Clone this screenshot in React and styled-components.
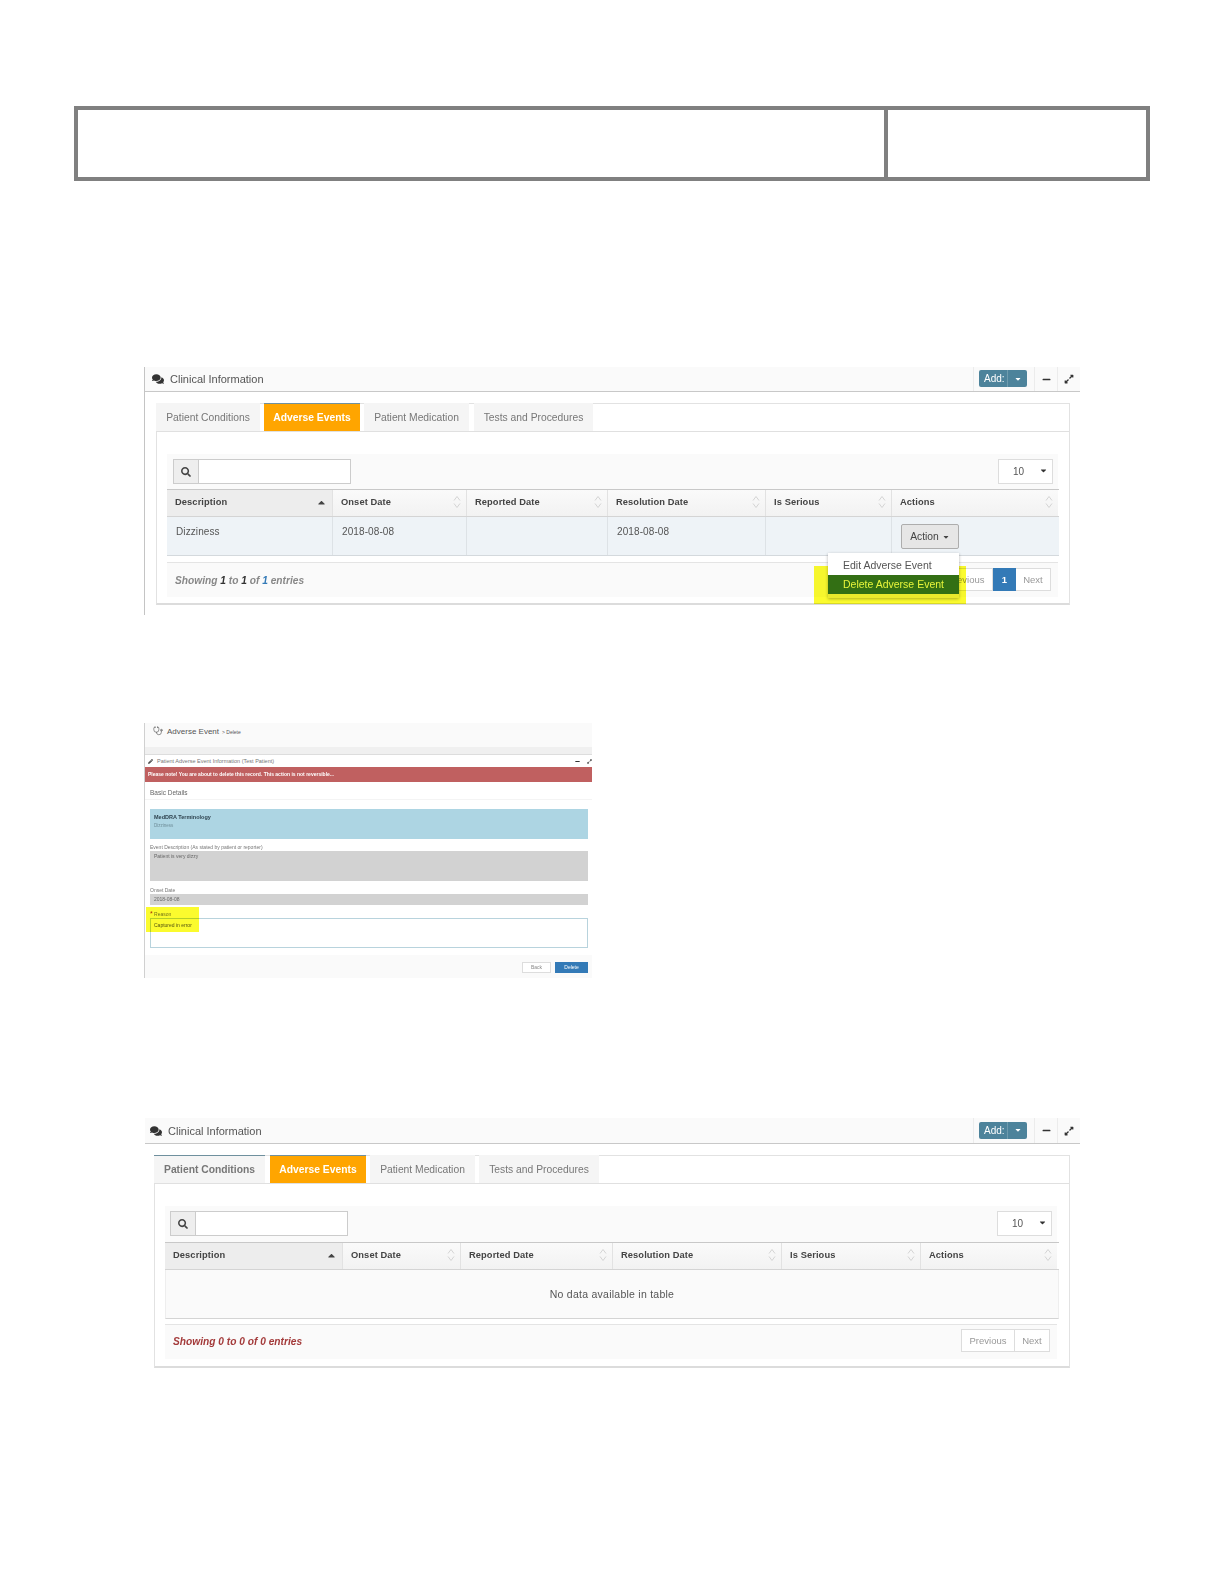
import React from "react";
import styled, { createGlobalStyle } from "styled-components";
import {
  FaComments,
  FaSearch,
  FaMinus,
  FaExpandAlt,
  FaPencilAlt,
  FaCaretUp,
  FaCaretDown,
} from "react-icons/fa";
import { Stethoscope } from "lucide-react";

const HEADINGS = [
  "Description",
  "Onset Date",
  "Reported Date",
  "Resolution Date",
  "Is Serious",
  "Actions",
];

const TAB_NAMES = [
  "Patient Conditions",
  "Adverse Events",
  "Patient Medication",
  "Tests and Procedures",
];

function SortIcon() {
  return (
    <SortSvg viewBox="0 0 8 14">
      <path d="M1 5.5 4 1.5l3 4M1 8.5l3 4 3-4" />
    </SortSvg>
  );
}

function ClinicalPanel({ first, tabWidths, tabGaps, cols, accentTab, children, footer }) {
  return (
    <Section $framed={first}>
      <PanelHeader $height={first ? 25 : 26} $left={first ? 7 : 5}>
        <FaComments size={12} />
        <HeaderTitle>Clinical Information</HeaderTitle>
        <HeaderTools>
          <AddCell>
            <AddButton>
              <AddLabel>Add:</AddLabel>
              <AddCaret>
                <FaCaretDown size={8} />
              </AddCaret>
            </AddButton>
          </AddCell>
          <ToolCell>
            <FaMinus size={9} />
          </ToolCell>
          <ToolCell>
            <FaExpandAlt size={10} />
          </ToolCell>
        </HeaderTools>
      </PanelHeader>
      <TabBox $left={first ? 11 : 9} $width={first ? 914 : 916} $bottom={first ? 6 : 7}>
        <TabBar>
          {TAB_NAMES.map((name, i) => (
            <Tab
              key={name}
              $width={tabWidths[i]}
              $gap={tabGaps[i]}
              $active={i === 1}
              $accent={accentTab && i === 0}
            >
              {name}
            </Tab>
          ))}
        </TabBar>
        <TabContent>
          <Toolbar $height={first ? 35 : 36} $width={first ? 891 : 892} $left={first ? 6 : 5}>
            <SearchGroup>
              <SearchAddon>
                <FaSearch size={10} />
              </SearchAddon>
              <SearchInput type="text" />
            </SearchGroup>
            <LengthSelect>
              10
              <FaCaretDown size={9} />
            </LengthSelect>
          </Toolbar>
          <HeadRow $cols={cols}>
            {HEADINGS.map((h, i) => (
              <HeadCell key={h} $sorted={i === 0}>
                {h}
                {i === 0 ? <FaCaretUp size={11} /> : <SortIcon />}
              </HeadCell>
            ))}
          </HeadRow>
          {children}
          <TableFooter $gap={first ? 6 : 5} $width={first ? 891 : 892} $top={first ? 5 : 4}>
            {footer}
          </TableFooter>
        </TabContent>
      </TabBox>
    </Section>
  );
}

function DeleteForm() {
  return (
    <FormSection>
      <PageHead>
        <Stethoscope size={10} strokeWidth={1.5} />
        <PageTitle>Adverse Event</PageTitle>
        <PageCrumb>&gt; Delete</PageCrumb>
      </PageHead>
      <Band />
      <SubHead>
        <FaPencilAlt size={5} />
        <SubTitle>Patient Adverse Event Information (Test Patient)</SubTitle>
        <SubTools>
          <FaMinus size={5} />
          <FaExpandAlt size={5} />
        </SubTools>
      </SubHead>
      <AlertBar>Please note! You are about to delete this record. This action is not reversible...</AlertBar>
      <FormHeading>Basic Details</FormHeading>
      <FormBody>
        <TermBox>
          <TermTitle>MedDRA Terminology</TermTitle>
          <TermValue>Dizziness</TermValue>
        </TermBox>
        <FieldLabel $height={12}>Event Description (As stated by patient or reporter)</FieldLabel>
        <ReadOnlyBox $height={30}>Patient is very dizzy</ReadOnlyBox>
        <FieldLabel $height={13}>Onset Date</FieldLabel>
        <ReadOnlyBox $height={11}>2018-08-08</ReadOnlyBox>
        <ReasonField>
          <ReasonLabel>
            <Required>*</Required> Reason
          </ReasonLabel>
          <ReasonBox>Captured in error</ReasonBox>
          <FormHighlight />
        </ReasonField>
      </FormBody>
      <FormFooter>
        <BackButton>Back</BackButton>
        <DeleteButton>Delete</DeleteButton>
      </FormFooter>
    </FormSection>
  );
}

function App() {
  return (
    <Page>
      <GlobalStyle />
      <HeaderFrame>
        <FrameCell />
        <FrameCell />
      </HeaderFrame>

      <FirstBlock>
        <ClinicalPanel
          first
          tabWidths={[104, 96, 105, 119]}
          tabGaps={[4, 4, 5, 0]}
          cols="166px 134px 141px 158px 126px 166px"
          footer={
            <>
              <Entries>
                Showing <b>1</b> to <b>1</b> of <Blue>1</Blue> entries
              </Entries>
              <Pager>
                <PageButton $width={54}>Previous</PageButton>
                <PageButton $width={23} $current>
                  1
                </PageButton>
                <PageButton $width={35}>Next</PageButton>
              </Pager>
            </>
          }
        >
          <DataRow $cols="166px 134px 141px 158px 126px 166px">
            <DataCell>Dizziness</DataCell>
            <DataCell>2018-08-08</DataCell>
            <DataCell />
            <DataCell>2018-08-08</DataCell>
            <DataCell />
            <ActionCell>
              <ActionButton>
                Action <FaCaretDown size={8} />
              </ActionButton>
              <MenuHighlight />
              <Menu>
                <MenuItem>Edit Adverse Event</MenuItem>
                <MenuItem $picked>Delete Adverse Event</MenuItem>
              </Menu>
            </ActionCell>
          </DataRow>
        </ClinicalPanel>
      </FirstBlock>

      <SecondBlock>
        <DeleteForm />
      </SecondBlock>

      <ThirdBlock>
        <ClinicalPanel
          accentTab
          tabWidths={[111, 96, 105, 120]}
          tabGaps={[5, 4, 4, 0]}
          cols="178px 118px 152px 169px 139px 136px"
          footer={
            <>
              <Entries $empty>Showing 0 to 0 of 0 entries</Entries>
              <Pager>
                <PageButton $width={54}>Previous</PageButton>
                <PageButton $width={35}>Next</PageButton>
              </Pager>
            </>
          }
        >
          <EmptyRow>No data available in table</EmptyRow>
        </ClinicalPanel>
      </ThirdBlock>
    </Page>
  );
}

/* Styles */
const GlobalStyle = createGlobalStyle`
  html, body {
    margin: 0;
    background: #fff;
  }
  * {
    box-sizing: border-box;
  }
`;

const Page = styled.div`
  min-height: 1584px;
  padding-top: 106px;
  background: #fff;
  color: #555;
  font-family: "Liberation Sans", Arial, sans-serif;
`;

const HeaderFrame = styled.div`
  display: grid;
  grid-template-columns: 810px 258px;
  width: 1076px;
  height: 75px;
  margin-left: 74px;
  border: 4px solid #808080;
`;

const FrameCell = styled.div`
  &:first-child {
    border-right: 4px solid #808080;
  }
`;

const FirstBlock = styled.div`
  margin: 186px 0 0 144px;
`;

const SecondBlock = styled.div`
  margin: 108px 0 0 144px;
`;

const ThirdBlock = styled.div`
  margin: 140px 0 0 144px;
`;

const Section = styled.section`
  width: 936px;
  padding-bottom: ${(p) => (p.$framed ? "10px" : "0")};
  border-left: 1px solid ${(p) => (p.$framed ? "#c4c4c4" : "transparent")};
`;

const PanelHeader = styled.header`
  display: flex;
  align-items: center;
  height: ${(p) => p.$height}px;
  padding-left: ${(p) => p.$left}px;
  background: #fafafa;
  border-bottom: 1px solid #c8c8c8;
  color: #333;
`;

const HeaderTitle = styled.span`
  margin-left: 6px;
  font-size: 11px;
  color: #555;
`;

const HeaderTools = styled.div`
  display: flex;
  align-self: stretch;
  margin-left: auto;
`;

const ToolCell = styled.div`
  display: flex;
  align-items: center;
  justify-content: center;
  width: 23px;
  border-left: 1px solid #ececec;
  color: #333;
`;

const AddCell = styled(ToolCell)`
  width: 61px;
  padding-left: 5px;
  justify-content: flex-start;
`;

const AddButton = styled.div`
  display: flex;
  width: 48px;
  height: 17px;
  margin-top: -1px;
  border-radius: 2px;
  background: #4d839b;
  color: #fff;
  font-size: 10px;
  line-height: 17px;
`;

const AddLabel = styled.span`
  width: 29px;
  padding-left: 5px;
  border-right: 1px solid #6f9bae;
`;

const AddCaret = styled.span`
  display: flex;
  flex: 1;
  align-items: center;
  justify-content: center;
`;

const TabBox = styled.div`
  width: ${(p) => p.$width}px;
  margin: 11px 0 0 ${(p) => p.$left}px;
  border: 1px solid #e2e2e2;
  border-bottom: 2px solid #dcdcdc;
  padding-bottom: ${(p) => p.$bottom}px;
`;

const TabBar = styled.div`
  display: flex;
  height: 29px;
  margin: -1px 0 0 -1px;
  border-bottom: 1px solid #e0e0e0;
`;

const Tab = styled.div`
  display: flex;
  align-items: center;
  justify-content: center;
  width: ${(p) => p.$width}px;
  margin-right: ${(p) => p.$gap}px;
  background: ${(p) => (p.$active ? "#ffa500" : "#f5f5f5")};
  border-top: 1px solid ${(p) => (p.$active || p.$accent ? "#6f909e" : "#f5f5f5")};
  color: ${(p) => (p.$active ? "#fff" : "#777")};
  font-size: 10.3px;
  font-weight: ${(p) => (p.$active || p.$accent ? "bold" : "normal")};
  white-space: nowrap;
`;

const TabContent = styled.div`
  padding: 22px 10px 0;
`;

const Toolbar = styled.div`
  display: flex;
  align-items: flex-start;
  justify-content: space-between;
  width: ${(p) => p.$width}px;
  height: ${(p) => p.$height}px;
  padding: 5px 5px 0 ${(p) => p.$left}px;
  background: #fafafa;
`;

const SearchGroup = styled.div`
  display: flex;
  height: 25px;
`;

const SearchAddon = styled.div`
  display: flex;
  align-items: center;
  justify-content: center;
  width: 25px;
  background: #eee;
  border: 1px solid #ccc;
  border-right: 0;
  color: #444;
`;

const SearchInput = styled.input`
  width: 153px;
  height: 25px;
  padding: 0;
  background: #fff;
  border: 1px solid #ccc;
  border-radius: 0;
  outline: 0;
`;

const LengthSelect = styled.div`
  display: flex;
  align-items: center;
  justify-content: space-between;
  width: 55px;
  height: 25px;
  padding: 0 4px 0 14px;
  background: #fff;
  border: 1px solid #ddd;
  color: #555;
  font-size: 10px;

  svg {
    margin-top: -3px;
    color: #333;
  }
`;

const HeadRow = styled.div`
  display: grid;
  grid-template-columns: ${(p) => p.$cols};
  height: 28px;
  border-top: 1px solid #c8c8c8;
  border-bottom: 1px solid #d4d4d4;
`;

const HeadCell = styled.div`
  display: flex;
  align-items: center;
  justify-content: space-between;
  padding: 0 5px 2px 8px;
  background: ${(p) => (p.$sorted ? "#ededed" : "linear-gradient(#fafafa, #f2f2f2)")};
  border-right: 1px solid #e2e2e2;
  color: #444;
  font-size: 9.3px;
  font-weight: bold;
  letter-spacing: 0.1px;

  &:last-child {
    border-right: 0;
  }
`;

const SortSvg = styled.svg`
  width: 8px;
  height: 14px;
  fill: none;
  stroke: #d4d4d4;
  stroke-width: 1;
`;

const DataRow = styled.div`
  display: grid;
  grid-template-columns: ${(p) => p.$cols};
  height: 39px;
  background: #eef3f7;
  border-bottom: 1px solid #d4d9dd;
`;

const DataCell = styled.div`
  padding: 8px 8px 0 9px;
  border-right: 1px solid #dde2e6;
  color: #555;
  font-size: 10px;
  line-height: 14px;
  letter-spacing: 0.1px;
`;

const ActionCell = styled.div`
  position: relative;
  padding: 7px 0 0 9px;
`;

const ActionButton = styled.div`
  display: flex;
  align-items: center;
  justify-content: center;
  gap: 3px;
  width: 58px;
  height: 25px;
  background: #e6e6e6;
  border: 1px solid #adadad;
  border-radius: 2px;
  color: #444;
  font-size: 10.3px;
`;

const MenuHighlight = styled.div`
  position: absolute;
  top: 49px;
  left: -78px;
  width: 152px;
  height: 38px;
  background: #fbfb2e;
  mix-blend-mode: multiply;
`;

const Menu = styled.div`
  position: absolute;
  top: 36px;
  left: -64px;
  width: 131px;
  height: 45px;
  padding-top: 3px;
  background: linear-gradient(#fff 0 41px, #e9e92c 41px);
  box-shadow: 0 1px 3px rgba(0, 0, 0, 0.3);
`;

const MenuItem = styled.div`
  height: 19px;
  padding-left: 15px;
  background: ${(p) => (p.$picked ? "#336f14" : "transparent")};
  color: ${(p) => (p.$picked ? "#e7f53a" : "#555")};
  font-size: 10.5px;
  line-height: 19px;
  white-space: nowrap;
`;

const EmptyRow = styled.div`
  display: flex;
  align-items: center;
  justify-content: center;
  height: 49px;
  background: #fafafa;
  border-bottom: 1px solid #d4d4d4;
  border-left: 1px solid #eee;
  border-right: 1px solid #eee;
  color: #555;
  font-size: 10.5px;
  letter-spacing: 0.25px;
`;

const TableFooter = styled.div`
  display: flex;
  align-items: flex-start;
  justify-content: space-between;
  width: ${(p) => p.$width}px;
  height: 35px;
  margin-top: ${(p) => p.$gap}px;
  padding: ${(p) => p.$top}px 7px 0 8px;
  background: #fafafa;
  border-top: 1px solid #e4e4e4;
`;

const Entries = styled.div`
  margin-top: 6px;
  color: ${(p) => (p.$empty ? "#a33a3a" : "#888")};
  font-size: 10.2px;
  font-style: italic;
  font-weight: bold;
  line-height: 14px;

  b {
    color: #333;
  }
`;

const Blue = styled.span`
  color: #337ab7;
`;

const Pager = styled.div`
  display: flex;
  height: 23px;
`;

const PageButton = styled.div`
  display: flex;
  align-items: center;
  justify-content: center;
  width: ${(p) => p.$width}px;
  background: ${(p) => (p.$current ? "#337ab7" : "#fff")};
  border: 1px solid ${(p) => (p.$current ? "#337ab7" : "#ddd")};
  border-left-width: ${(p) => (p.$current ? "1px" : "0")};
  color: ${(p) => (p.$current ? "#fff" : "#999")};
  font-size: 9.5px;
  font-weight: ${(p) => (p.$current ? "bold" : "normal")};

  &:first-child {
    border-left-width: 1px;
  }
`;

const FormSection = styled.section`
  width: 448px;
  height: 255px;
  border-left: 1px solid #d0d0d0;
  color: #666;
  filter: blur(0.35px);
`;

const PageHead = styled.div`
  display: flex;
  align-items: center;
  height: 24px;
  padding: 0 0 8px 8px;
  background: #fafafa;
  color: #555;
`;

const PageTitle = styled.span`
  margin-left: 4px;
  font-size: 8px;
`;

const PageCrumb = styled.span`
  margin: 2px 0 0 3px;
  font-size: 5px;
`;

const Band = styled.div`
  height: 7px;
  background: #f0f0f0;
`;

const SubHead = styled.div`
  display: flex;
  align-items: center;
  height: 13px;
  padding: 0 0 0 3px;
  background: #fff;
  border-top: 1px solid #ddd;
  color: #444;
`;

const SubTitle = styled.span`
  margin-left: 4px;
  color: #777;
  font-size: 5.5px;
`;

const SubTools = styled.div`
  display: flex;
  gap: 7px;
  margin-left: auto;
  color: #333;
`;

const AlertBar = styled.div`
  height: 15px;
  padding-left: 3px;
  background: #c06060;
  color: #fff;
  font-size: 5px;
  font-weight: bold;
  line-height: 14px;
`;

const FormHeading = styled.div`
  height: 18px;
  padding-left: 5px;
  border-bottom: 1px solid #f4f4f4;
  color: #666;
  font-size: 6.5px;
  line-height: 22px;
`;

const FormBody = styled.div`
  margin: 0 4px 0 5px;
  padding-top: 9px;
`;

const TermBox = styled.div`
  height: 30px;
  padding: 5px 4px 0;
  background: #add5e3;
`;

const TermTitle = styled.div`
  color: #2f4450;
  font-size: 5.5px;
  font-weight: bold;
  line-height: 7px;
`;

const TermValue = styled.div`
  margin-top: 2px;
  color: #6f8e99;
  font-size: 4.5px;
  line-height: 6px;
`;

const FieldLabel = styled.div`
  display: flex;
  align-items: flex-end;
  height: ${(p) => p.$height}px;
  padding-bottom: 1px;
  color: #777;
  font-size: 5px;
`;

const ReadOnlyBox = styled.div`
  height: ${(p) => p.$height}px;
  padding: 2px 4px;
  background: #d2d2d2;
  color: #666;
  font-size: 5px;
  line-height: 7px;
`;

const ReasonField = styled.div`
  position: relative;
  margin-top: 2px;
`;

const ReasonLabel = styled.div`
  height: 11px;
  color: #777;
  font-size: 5px;
  line-height: 13px;
`;

const Required = styled.span`
  color: #b03030;
  font-size: 7px;
`;

const ReasonBox = styled.div`
  height: 30px;
  padding: 3px;
  background: #fff;
  border: 1px solid #b8d3dd;
  color: #555;
  font-size: 5px;
  line-height: 7px;
`;

const FormHighlight = styled.div`
  position: absolute;
  top: 0;
  left: -4px;
  width: 53px;
  height: 25px;
  background: #fbfb2e;
  mix-blend-mode: multiply;
`;

const FormFooter = styled.div`
  display: flex;
  justify-content: flex-end;
  gap: 4px;
  height: 23px;
  margin-top: 7px;
  padding: 7px 4px 0 0;
  background: #fafafa;
`;

const BackButton = styled.div`
  width: 29px;
  height: 11px;
  background: #fff;
  border: 1px solid #ddd;
  color: #888;
  font-size: 5px;
  line-height: 9px;
  text-align: center;
`;

const DeleteButton = styled.div`
  width: 33px;
  height: 11px;
  background: #337ab7;
  color: #fff;
  font-size: 5px;
  line-height: 11px;
  text-align: center;
`;

export default App;
